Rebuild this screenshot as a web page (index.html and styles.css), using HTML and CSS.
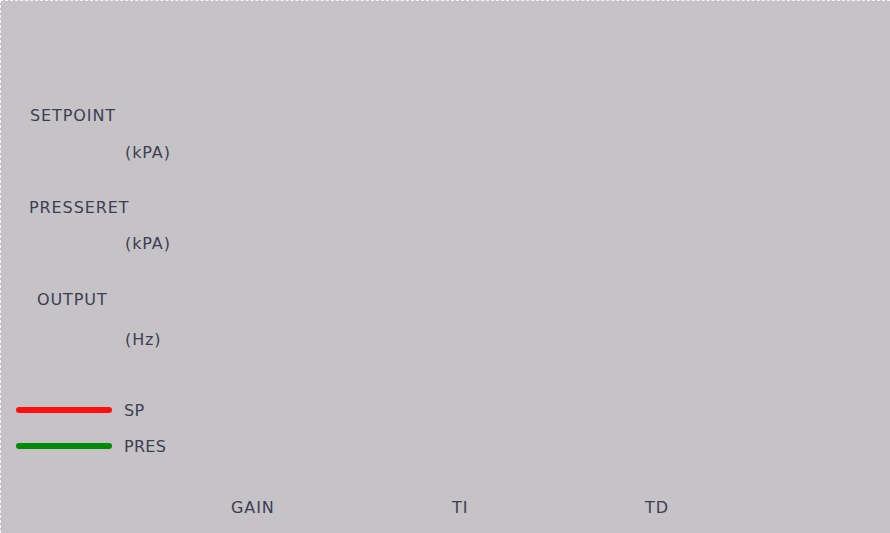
FILE: index.html
```html
<!DOCTYPE html>
<html>
<head>
<meta charset="utf-8">
<link rel="stylesheet" href="styles.css">
</head>
<body>
<div class="panel">
  <div class="group group-first">
    <div class="label">SETPOINT</div>
    <div class="unit">(kPA)</div>
  </div>
  <div class="group group-second">
    <div class="label label-pres">PRESSERET</div>
    <div class="unit">(kPA)</div>
  </div>
  <div class="group group-third">
    <div class="label label-out">OUTPUT</div>
    <div class="unit unit-hz">(Hz)</div>
  </div>
  <div class="legend">
    <div class="legend-row">
      <span class="swatch swatch-red"></span>
      <span class="legend-text">SP</span>
    </div>
    <div class="legend-row legend-row-2">
      <span class="swatch swatch-green"></span>
      <span class="legend-text">PRES</span>
    </div>
  </div>
  <div class="params">
    <span class="param param-gain">GAIN</span>
    <span class="param param-ti">TI</span>
    <span class="param param-td">TD</span>
  </div>
</div>
</body>
</html>
```
FILE: styles.css
```css
html, body {
  margin: 0;
  padding: 0;
  background: #c5c3c6;
}

.panel {
  width: 890px;
  height: 533px;
  box-sizing: border-box;
  background: #c5c3c6;
  border-top: 1px dashed #f4f4f6;
  border-left: 1px dashed #f4f4f6;
  padding-top: 105px;
  font-family: "DejaVu Sans", sans-serif;
  font-size: 16px;
  line-height: 19px;
  letter-spacing: 0.9px;
  color: #3d3e53;
  display: flex;
  flex-direction: column;
}

.group {
  display: flex;
  flex-direction: column;
  gap: 18px;
}

.group-second {
  margin-top: 36px;
  gap: 17px;
}

.group-third {
  margin-top: 37px;
  gap: 21px;
}

.label {
  padding-left: 29px;
}

.label-pres {
  padding-left: 28px;
}

.label-out {
  padding-left: 36px;
}

.unit {
  padding-left: 124px;
}

.legend {
  margin-top: 52px;
  display: flex;
  flex-direction: column;
  gap: 17px;
  padding-left: 15px;
}

.legend-row {
  display: flex;
  align-items: center;
  gap: 12px;
  height: 19px;
}

.legend-text {
  letter-spacing: 0.3px;
}

.swatch {
  display: block;
  width: 96px;
  height: 6px;
  border-radius: 3px;
  margin-top: -2px;
}

.swatch-red {
  background: #ff1010;
}

.swatch-green {
  background: #008a0a;
}

.params {
  margin-top: 42px;
  display: flex;
  padding-left: 230px;
}

.param-gain {
  width: 221px;
}

.param-ti {
  width: 193px;
}
```
